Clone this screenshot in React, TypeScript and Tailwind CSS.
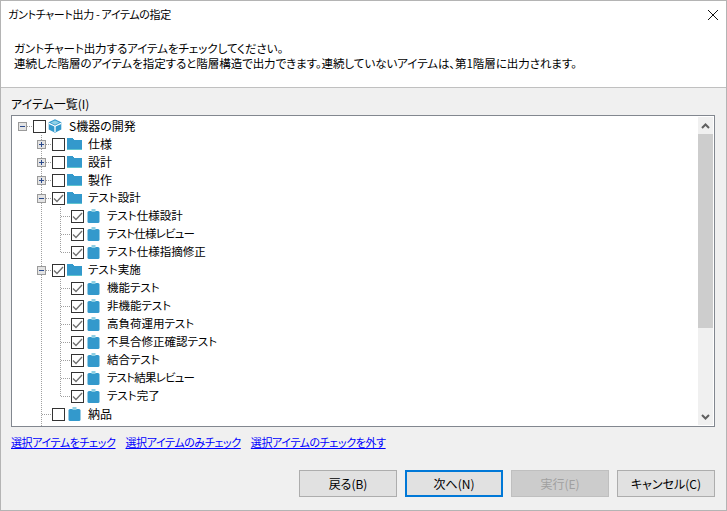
import React from 'react';

type Kind = 'root' | 'folder' | 'task';

interface TreeRow {
  cols: React.ReactNode[];
  kind: Kind;
  checked?: boolean;
  label: string;
  kanji?: boolean;
  narrow?: boolean;
}

const DOT = '#a0a0a0';

// one 19x18 cell of the tree's connector lines
const Guide: React.FC<{ v?: 'full' | 'half' | 'lower'; h?: boolean; exp?: '+' | '-' }> = ({ v, h, exp }) => (
  <svg width="19" height="18" viewBox="0 0 19 18" className="shrink-0 block" shapeRendering="crispEdges">
    {v === 'full' && <line x1="8.5" y1="0" x2="8.5" y2="18" stroke={DOT} strokeDasharray="1 1" />}
    {v === 'half' && <line x1="8.5" y1="0" x2="8.5" y2="9" stroke={DOT} strokeDasharray="1 1" />}
    {h && <line x1="9" y1="9.5" x2="19" y2="9.5" stroke={DOT} strokeDasharray="1 1" />}
    {exp && (
      <g>
        <rect x="4.5" y="5.5" width="8" height="8" fill="#e4e4e4" stroke="#9a9a9a" />
        <line x1="6" y1="9.5" x2="11" y2="9.5" stroke="#2b4a8c" />
        {exp === '+' && <line x1="8.5" y1="7" x2="8.5" y2="12" stroke="#2b4a8c" />}
      </g>
    )}
  </svg>
);

const CubeIcon = () => (
  <svg width="14" height="14" viewBox="0 0 14 14" className="shrink-0">
    <path d="M7 0.2 L13.3 3.2 V10.6 L7 13.8 L0.7 10.6 V3.2 Z" fill="#3399cc" strokeLinejoin="round" />
    <path d="M7 1.4 L11.4 3.6 L7 5.8 L2.6 3.6 Z" fill="#8fd0e6" />
    <path d="M7 7 V13" stroke="#ffffff" strokeWidth="1.3" />
    <path d="M1 4.4 L7 7.2 L13 4.4" fill="none" stroke="#ffffff" strokeWidth="1.2" />
  </svg>
);

const FolderIcon = () => (
  <svg width="15" height="12" viewBox="0 0 15 12" className="shrink-0 -mt-[1px]" shapeRendering="crispEdges">
    <path d="M0 0 H6 L7 2 H15 V11 H0 Z" fill="#3399cc" />
    <rect x="0" y="11" width="15" height="1" fill="#5fc4cf" />
  </svg>
);

const TaskIcon = () => (
  <svg width="13" height="14" viewBox="0 0 13 14" className="shrink-0 -mt-[1px]">
    <rect x="0.5" y="2" width="12" height="12" rx="1.5" fill="#3399cc" />
    <rect x="4.5" y="0" width="4" height="3" fill="#8fcfe3" />
  </svg>
);

const Check: React.FC<{ checked?: boolean }> = ({ checked }) => (
  <span className="w-[13px] h-[13px] border border-[#333333] bg-white shrink-0 flex items-center justify-center">
    {checked && (
      <svg width="11" height="9" viewBox="0 0 11 9">
        <path d="M1 4.5 L4 7.5 L10 1" fill="none" stroke="#707070" strokeWidth="1.3" />
      </svg>
    )}
  </span>
);

const lvl2 = (last?: boolean) => [
  <Guide key="a" />,
  <Guide key="b" v="full" />,
  <Guide key="c" v={last ? 'half' : 'full'} h />,
];
const lvl1 = (exp?: '+' | '-') => [<Guide key="a" />, <Guide key="b" v="full" h exp={exp} />];

const rows: TreeRow[] = [
  { cols: [<Guide key="a" h exp="-" />], kind: 'root', label: 'S機器の開発', kanji: true },
  { cols: lvl1('+'), kind: 'folder', label: '仕様', kanji: true },
  { cols: lvl1('+'), kind: 'folder', label: '設計', kanji: true },
  { cols: lvl1('+'), kind: 'folder', label: '製作', kanji: true },
  { cols: lvl1('-'), kind: 'folder', checked: true, label: 'テスト設計' },
  { cols: lvl2(), kind: 'task', checked: true, label: 'テスト仕様設計' },
  { cols: lvl2(), kind: 'task', checked: true, label: 'テスト仕様レビュー', narrow: true },
  { cols: lvl2(true), kind: 'task', checked: true, label: 'テスト仕様指摘修正' },
  { cols: lvl1('-'), kind: 'folder', checked: true, label: 'テスト実施' },
  { cols: lvl2(), kind: 'task', checked: true, label: '機能テスト' },
  { cols: lvl2(), kind: 'task', checked: true, label: '非機能テスト' },
  { cols: lvl2(), kind: 'task', checked: true, label: '高負荷運用テスト' },
  { cols: lvl2(), kind: 'task', checked: true, label: '不具合修正確認テスト' },
  { cols: lvl2(), kind: 'task', checked: true, label: '結合テスト' },
  { cols: lvl2(), kind: 'task', checked: true, label: 'テスト結果レビュー', narrow: true },
  { cols: lvl2(true), kind: 'task', checked: true, label: 'テスト完了' },
  { cols: lvl1(), kind: 'task', label: '納品', kanji: true },
  { cols: [<Guide key="a" />, <Guide key="b" v="full" />], kind: 'task', label: '' },
];

const Row: React.FC<{ row: TreeRow }> = ({ row }) => (
  <div className="h-[18px] flex items-center shrink-0">
    {row.cols}
    {row.label && (
      <>
        <Check checked={row.checked} />
        <span className="w-[18px] flex justify-center shrink-0">
          {row.kind === 'root' && <CubeIcon />}
          {row.kind === 'folder' && <FolderIcon />}
          {row.kind === 'task' && <TaskIcon />}
        </span>
        <span
          className={
            row.kanji
              ? 'ml-[5px] mb-[2px] whitespace-nowrap text-black text-[12px]'
              : row.narrow
                ? 'ml-[5px] mb-[2px] whitespace-nowrap text-black text-[11.5px] tracking-[-0.8px]'
                : 'ml-[5px] mb-[2px] whitespace-nowrap text-black text-[11.5px]'
          }
        >
          {row.label}
        </span>
      </>
    )}
  </div>
);

const Button: React.FC<{ label: string; variant?: 'default' | 'disabled' }> = ({ label, variant }) => (
  <div
    className={
      variant === 'default'
        ? 'w-[98px] h-[27px] flex items-center justify-center border-2 border-[#0078d7] bg-[#e1e1e1] text-black'
        : variant === 'disabled'
          ? 'w-[98px] h-[27px] flex items-center justify-center border border-[#bfbfbf] bg-[#cccccc] text-[#a0a0a0]'
          : 'w-[98px] h-[27px] flex items-center justify-center border border-[#adadad] bg-[#e1e1e1] text-black'
    }
  >
    {label}
  </div>
);

export default function App() {
  return (
    <div className="w-[727px] h-[511px] flex flex-col overflow-hidden border border-[#b4b4b4] bg-[#f0f0f0] text-[12px] leading-[15px] text-black [font-family:'Noto_Sans_CJK_JP','Noto_Sans',sans-serif] [font-feature-settings:'palt']">
      <div className="h-[87px] shrink-0 bg-white border-b border-[#c0c0c0] flex flex-col">
        <div className="h-[27px] flex items-center justify-between pl-[7px] pr-[8px]">
          <span className="text-[11px] tracking-[-0.35px]">ガントチャート出力 - アイテムの指定</span>
          <svg width="10" height="10" viewBox="0 0 10 10">
            <path d="M0 0 L10 10 M10 0 L0 10" stroke="#111111" strokeWidth="1" />
          </svg>
        </div>
        <div className="pl-[13px] pt-[13px] text-[11.5px] tracking-[-0.05px] leading-[15px]">
          <div>ガントチャート出力するアイテムをチェックしてください。</div>
          <div>連続した階層のアイテムを指定すると階層構造で出力できます。連続していないアイテムは、第1階層に出力されます。</div>
        </div>
      </div>

      <div className="flex-1 flex flex-col pl-[10px] pr-[11px]">
        <div className="h-[27px] flex items-end pb-[4px]">アイテム一覧(I)</div>
        <div className="h-[312px] border border-[#82878f] bg-white flex overflow-hidden">
          <div className="flex-1 flex flex-col pt-[1px] pl-[2px] overflow-hidden">
            {rows.map((r, i) => (
              <Row key={i} row={r} />
            ))}
          </div>
          <div className="w-[15px] mr-[1px] my-[1px] shrink-0 bg-[#f0f0f0] flex flex-col">
            <div className="h-[17px] flex items-center justify-center">
              <svg width="9" height="6" viewBox="0 0 9 6">
                <path d="M1 5 L4.5 1.5 L8 5" fill="none" stroke="#606060" strokeWidth="2" />
              </svg>
            </div>
            <div className="h-[194px] bg-[#cdcdcd]" />
            <div className="flex-1" />
            <div className="h-[17px] flex items-center justify-center">
              <svg width="9" height="6" viewBox="0 0 9 6">
                <path d="M1 1 L4.5 4.5 L8 1" fill="none" stroke="#606060" strokeWidth="2" />
              </svg>
            </div>
          </div>
        </div>
        <div className="h-[30px] flex items-center gap-[10px] text-[11px] tracking-[-0.4px] text-[#0000ff] underline">
          <span>選択アイテムをチェック</span>
          <span>選択アイテムのみチェック</span>
          <span>選択アイテムのチェックを外す</span>
        </div>
        <div className="mt-[13px] flex justify-end gap-[8px]">
          <Button label="戻る(B)" />
          <Button label="次へ(N)" variant="default" />
          <Button label="実行(E)" variant="disabled" />
          <Button label="キャンセル(C)" />
        </div>
      </div>
    </div>
  );
}
